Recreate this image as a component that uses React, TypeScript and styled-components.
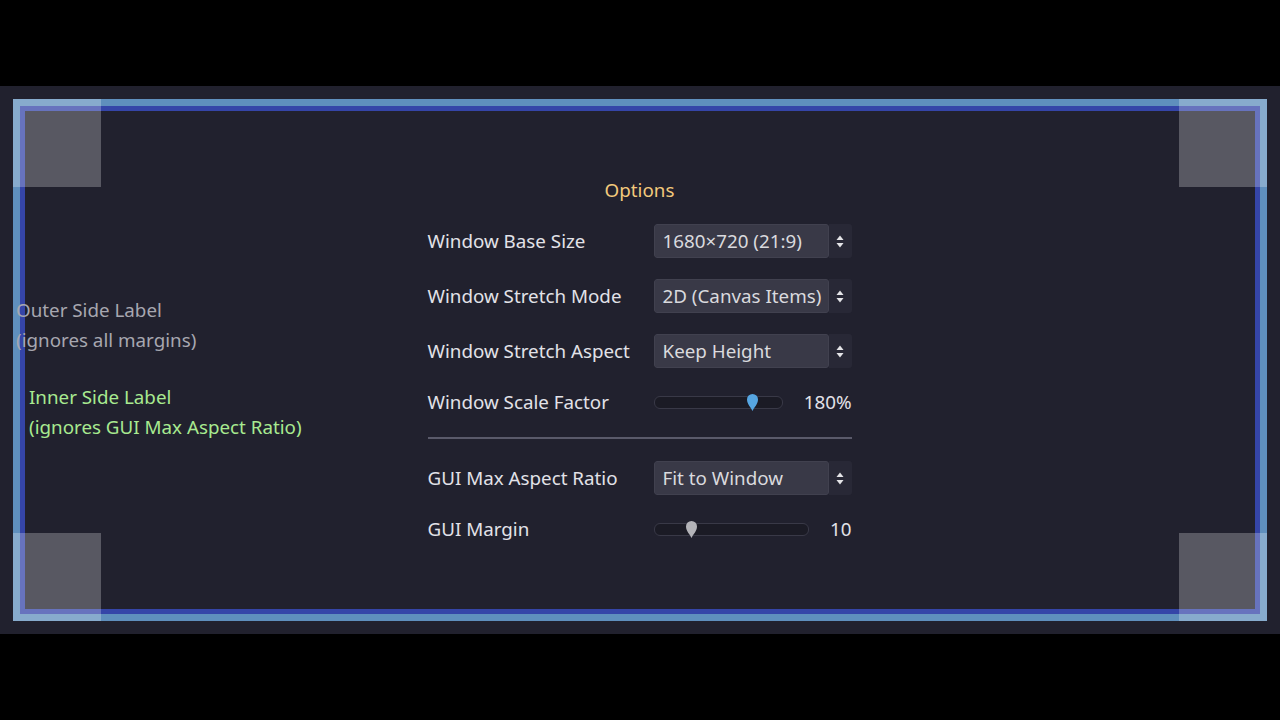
import React from 'react';
import styled, { createGlobalStyle, css } from 'styled-components';

const GlobalStyle = createGlobalStyle`
  html, body {
    margin: 0;
    padding: 0;
    background: #000;
  }
  body {
    font-family: "Noto Sans", "Open Sans", sans-serif;
    font-size: 18.8px;
  }
`;

const Screen = styled.div`
  width: 1280px;
  height: 720px;
  display: flex;
  flex-direction: column;
  justify-content: center;
  background: #000;
  overflow: hidden;
`;

const Viewport = styled.div`
  position: relative;
  height: 548px;
  background: #21212e;
  display: grid;
  grid-template-columns: 1fr auto 1fr;
`;

const Frame = styled.div`
  position: absolute;
  inset: 13px;
  border: 7px solid #5f8fbd;
  box-shadow: inset 0 0 0 5px #3545a8;
  pointer-events: none;
`;

type Corner = 'tl' | 'tr' | 'bl' | 'br';

const CornerBox = styled.div<{ $at: Corner }>`
  position: absolute;
  width: 88px;
  height: 88px;
  background: rgba(255, 255, 255, 0.25);
  pointer-events: none;
  ${({ $at }) => ($at[0] === 't' ? css`top: 13px;` : css`bottom: 13px;`)}
  ${({ $at }) => ($at[1] === 'l' ? css`left: 13px;` : css`right: 13px;`)}
`;

const SideLabels = styled.div`
  position: relative;
  z-index: 1;
  grid-column: 1;
  align-self: start;
  padding: 209px 0 0 16px;
  line-height: 30px;
`;

const OuterLabel = styled.div`
  color: #a7a7b0;
`;

const InnerLabel = styled.div`
  margin: 27px 0 0 13px;
  color: #a8ea90;
`;

const Panel = styled.div`
  position: relative;
  z-index: 1;
  grid-column: 2;
  align-self: start;
  margin: 91px 0 0 -1px;
  display: grid;
  grid-template-columns: 226px 198px;
  align-items: center;
  row-gap: 21px;
`;

const Title = styled.div`
  grid-column: 1 / -1;
  text-align: center;
  color: #f2c97c;
  line-height: 26px;
`;

const RowLabel = styled.div`
  color: #e2e2e8;
  line-height: 26px;
`;

const Select = styled.div`
  display: flex;
  height: 34px;
  border-radius: 3px;
  overflow: hidden;
`;

const SelectValue = styled.div`
  flex: 1;
  display: flex;
  align-items: center;
  padding-left: 8px;
  background: #393947;
  border: 1px solid #41414f;
  border-radius: 3px;
  color: #dadade;
  white-space: nowrap;
`;

const SelectArrow = styled.div`
  width: 23px;
  display: flex;
  align-items: center;
  justify-content: center;
  background: #282836;
`;

const SliderRow = styled.div`
  display: flex;
  align-items: center;
  gap: 21px;
  height: 24px;
`;

const Track = styled.div`
  position: relative;
  flex: 1;
  height: 11px;
  border-radius: 6px;
  background: #1b1b25;
  border: 1px solid #393947;
`;

const Grabber = styled.svg`
  position: absolute;
  top: 50%;
  margin-top: -8px;
  width: 11px;
  height: 17px;
`;

const SliderValue = styled.div`
  color: #e2e2e8;
  line-height: 24px;
`;

const Separator = styled.div`
  grid-column: 1 / -1;
  height: 4px;
  display: flex;
  align-items: center;

  &::after {
    content: '';
    flex: 1;
    height: 2px;
    background: #5a5a6a;
  }
`;

function ArrowIcon() {
  return (
    <svg width="8" height="13" viewBox="0 0 8 13">
      <path d="M4 0.5 L7.5 5 L0.5 5 Z" fill="#e4e4e8" />
      <path d="M0.5 8 L7.5 8 L4 12.5 Z" fill="#e4e4e8" />
    </svg>
  );
}

function Dropdown({ value }: { value: string }) {
  return (
    <Select>
      <SelectValue>{value}</SelectValue>
      <SelectArrow>
        <ArrowIcon />
      </SelectArrow>
    </Select>
  );
}

type SliderProps = {
  value: number;
  min: number;
  max: number;
  label: string;
  color: string;
};

function Slider({ value, min, max, label, color }: SliderProps) {
  const ratio = (value - min) / (max - min);
  return (
    <SliderRow>
      <Track>
        <Grabber viewBox="0 0 11 17" style={{ left: `calc((100% - 11px) * ${ratio})` }}>
          <path
            d="M5.5 17 C4 13.5 0 10 0 5.5 A5.5 5.5 0 0 1 11 5.5 C11 10 7 13.5 5.5 17 Z"
            fill={color}
          />
        </Grabber>
      </Track>
      <SliderValue>{label}</SliderValue>
    </SliderRow>
  );
}

export default function App() {
  const corners: Corner[] = ['tl', 'tr', 'bl', 'br'];
  return (
    <>
      <GlobalStyle />
      <Screen>
        <Viewport>
          <Frame />
          {corners.map((c) => (
            <CornerBox key={c} $at={c} />
          ))}
          <SideLabels>
            <OuterLabel>
              Outer Side Label
              <br />
              (ignores all margins)
            </OuterLabel>
            <InnerLabel>
              Inner Side Label
              <br />
              (ignores GUI Max Aspect Ratio)
            </InnerLabel>
          </SideLabels>
          <Panel>
            <Title>Options</Title>
            <RowLabel>Window Base Size</RowLabel>
            <Dropdown value="1680×720 (21:9)" />
            <RowLabel>Window Stretch Mode</RowLabel>
            <Dropdown value="2D (Canvas Items)" />
            <RowLabel>Window Stretch Aspect</RowLabel>
            <Dropdown value="Keep Height" />
            <RowLabel>Window Scale Factor</RowLabel>
            <Slider value={180} min={100} max={200} label="180%" color="#56a6e2" />
            <Separator />
            <RowLabel>GUI Max Aspect Ratio</RowLabel>
            <Dropdown value="Fit to Window" />
            <RowLabel>GUI Margin</RowLabel>
            <Slider value={10} min={0} max={45} label="10" color="#b3b3b8" />
          </Panel>
        </Viewport>
      </Screen>
    </>
  );
}
